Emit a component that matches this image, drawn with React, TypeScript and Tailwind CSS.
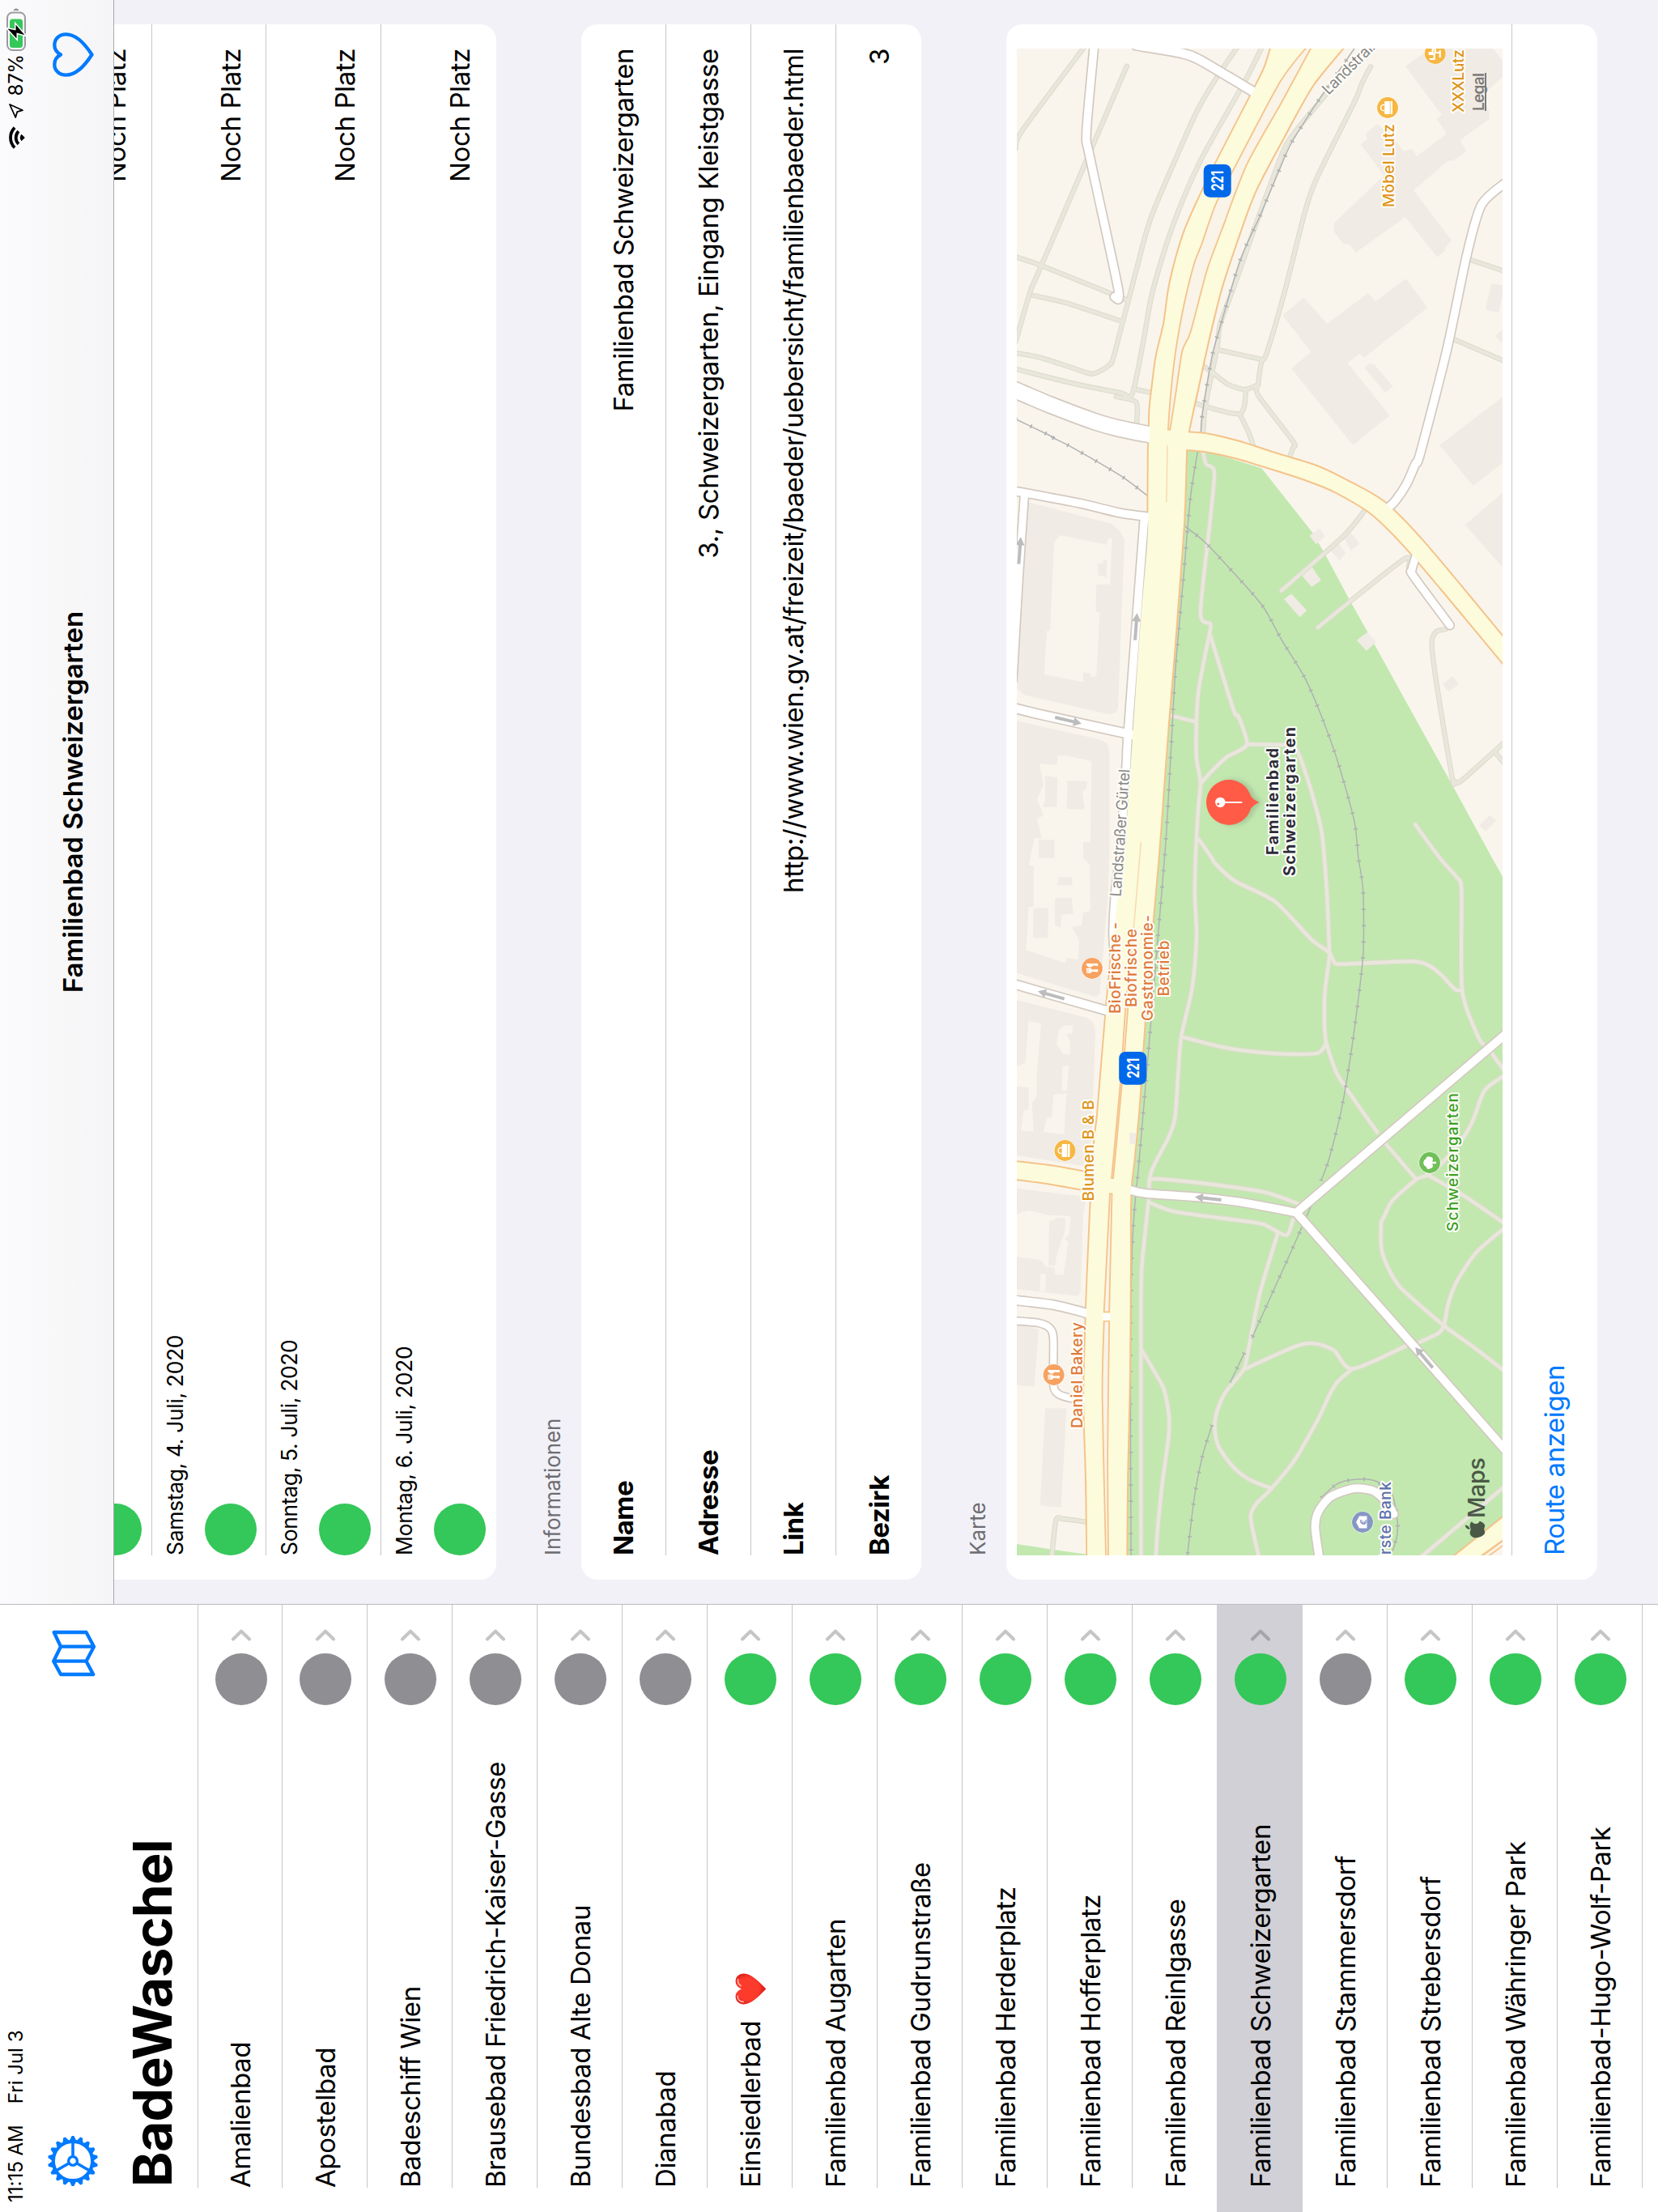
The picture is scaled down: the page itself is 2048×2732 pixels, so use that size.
import type { ReactNode } from "react";
import { FaApple, FaTree, FaUtensils } from "react-icons/fa";

/* ------------------------------------------------------------------ */
/* Map geometry                                                        */
/* ------------------------------------------------------------------ */

type Pt = [number, number];

// The survey sheets A–D are stacked north to south; each has its own offset.
const SHEET_OFFSET: Record<string, number> = { A: 40, B: 540, C: 1040, D: 1460 };

function pts(src: string): Pt[] {
  let sheet = "A";
  const out: Pt[] = [];
  for (const tok of src.trim().split(/\s+/)) {
    if (SHEET_OFFSET[tok] !== undefined) {
      sheet = tok;
      continue;
    }
    const [x, y] = tok.split(",").map(Number);
    out.push([1921 - SHEET_OFFSET[sheet] - y / 3, x / 2.45 - 16]);
  }
  return out;
}

const f = (n: number) => n.toFixed(1);

function curve(p: Pt[]): string {
  let d = "";
  const k = 0.13;
  for (let i = 0; i < p.length - 1; i++) {
    const p0 = p[i - 1] ?? p[i];
    const p1 = p[i];
    const p2 = p[i + 1];
    const p3 = p[i + 2] ?? p2;
    d += `C${f(p1[0] + (p2[0] - p0[0]) * k)} ${f(p1[1] + (p2[1] - p0[1]) * k)} ${f(p2[0] - (p3[0] - p1[0]) * k)} ${f(p2[1] - (p3[1] - p1[1]) * k)} ${f(p2[0])} ${f(p2[1])}`;
  }
  return d;
}

const line = (src: string) => {
  const p = pts(src);
  return `M${f(p[0][0])} ${f(p[0][1])}${curve(p)}`;
};

const poly = (src: string) =>
  "M" + pts(src).map((p) => `${f(p[0])} ${f(p[1])}`).join("L") + "Z";

const ribbon = (a: string, b: string) => {
  const pa = pts(a);
  const pb = pts(b).reverse();
  return `M${f(pa[0][0])} ${f(pa[0][1])}${curve(pa)}L${f(pb[0][0])} ${f(pb[0][1])}${curve(pb)}Z`;
};

const PARKS = [
  "B 552,45 600,45 780,115 935,355 975,440 1045,600 1100,720 1215,975 1360,1295 1478,1560 C 1515,141 D 1515,1240 1365,1390 370,1390 385,30 C 465,0 B 480,1350 520,720",
  "D 36,1340 150,1362 255,1380 255,1390 36,1390",
];

const BUILDINGS = [
  "A 1215,125 1290,60 1480,60 1510,105 1510,165 1445,235 1468,290 1470,320 1380,400 1400,440 1360,475 1345,475 1240,585 1355,770 1338,795 1335,810 1312,833 1215,685 1065,815 1045,785 1028,785 997,735 1000,705 1150,530 1080,415 1100,395 1095,375 1130,340 1145,355 1165,365 1210,440 1235,432 1250,458 1340,375 1310,320 1325,305",
  "A 843,1048 908,983 978,1080 1102,967 1125,997 1217,913 1282,1020 1090,1205 1078,1190 1040,1225 1168,1420 1055,1527 870,1245 930,1185",
  "A 1093,1245 1105,1227 1120,1230 1178,1312 1153,1335",
  "A 1475,930 1515,938 1498,1038 1457,1028",
  "A 1487,1125 1515,1095 1515,1160",
  "B 1318,30 1515,-155 1515,90 1420,180",
  "B 1395,325 1515,200 1515,490",
  "B 1035,0 1085,0 1060,27",
  "B 925,365 955,338 972,368 945,397",
  "B 900,510 932,480 960,530 932,555",
  "B 848,600 870,580 917,642 895,667",
  "B 1068,752 1100,722 1127,758 1097,792",
  "B 985,415 1012,390 1035,430 1015,457",
  "B 1030,375 1052,355 1077,395 1050,420",
  "B 1328,915 1358,885 1378,915 1345,943",
  "B 1438,1440 1470,1400 1490,1420 1458,1460",
  "B 72,240 325,320 350,345 365,380 345,1010 335,1022 318,1027 60,955 40,930 60,520",
  "B 36,1050 290,1120 312,1135 320,1165 C 320,0 315,200 290,560 280,573 268,570 36,485",
  "C 36,585 250,650 268,665 277,700 265,1100 240,1200 36,1160",
  "C 36,1283 250,1315 240,1380 D 232,405 225,422 36,396",
  "D 36,525 105,545 92,758 36,752",
  "D 125,838 190,838 173,1205 110,1198",
];

const COURTYARDS = [
  "B 170,363 312,398 315,375 328,375 326,405 322,545 280,545 278,645 290,650 280,885 265,888 262,875 240,870 240,907 122,880 130,717 140,717 152,390",
  "B 108,1210 160,1215 163,1180 190,1180 265,1200 262,1500 240,1500 240,1560 C 260,82 262,255 240,262 235,310 205,315 228,365 225,435 190,430 185,448 67,400 75,240 90,240 90,90 75,85 90,0 B 90,1515 92,1485 115,1485 100,1415 120,1400 100,1340 120,1290",
  "C 75,663 113,672 100,850 100,940 85,970 90,1072 52,1070 60,995 75,990 75,910 39,905 39,830 65,820",
  "C 165,700 180,680 208,680 208,708 190,712 200,740 200,788 180,785 160,750",
  "C 178,830 197,828 190,920 175,920",
  "C 150,935 190,930 185,1010 183,1082 120,1075 130,1022 145,1020",
  "D 36,120 75,105 135,122 202,125 198,195 185,210 195,225 180,345 155,340 155,318 125,312 115,290 36,276",
  "D 112,340 127,340 125,405 108,402",
];

const ANNEXES = [
  "B 285,468 300,468 300,455 312,455 310,520 285,510",
  "C 165,130 207,130 207,160 162,160",
  "C 90,245 135,245 133,355 88,355",
  "B 192,1272 252,1275 250,1300 238,1315 245,1380 190,1378",
  "B 125,1255 162,1260 160,1370 118,1370 125,1345",
  "C 155,207 205,207 210,265 175,270 172,315 155,310",
  "B 105,1490 153,1492 153,1560 105,1560",
  "D 137,148 163,132 185,132 185,180 160,270 155,310 135,310",
];

const PATHS = [
  "A 245,52 55,365 36,430",
  "A 372,125 115,860 80,960 36,1145",
  "A 36,832 115,865 375,993",
  "A 90,975 190,1003 355,1070",
  "A 708,52 645,165 585,290 530,440 450,670 420,790 335,1190 320,1230 303,1247 265,1265 200,1240 110,1205 36,1187",
  "A 782,52 730,180 595,475 510,720 450,960 420,1160 388,1340 350,1335 200,1298 36,1247",
  "A 340,1350 400,1370 402,1445",
  "A 395,1322 445,1335",
  "A 500,1352 515,1355",
  "A 975,230 900,340 855,415 820,520 760,720 700,930 655,1080 645,1170 625,1290 608,1400 603,1490",
  "B 603,55 612,100 637,128 625,300 595,650 625,692 620,740 590,930 583,1050 583,1190 595,1280 588,1380 580,1560 C 578,200 583,350 570,540 537,720 528,850 518,1020 500,1090 445,1225 438,1330 D 425,220 415,420 415,1390",
  "A 1110,127 1085,185 1060,260 945,545 910,670 850,960 795,1190 780,1220 770,1300 770,1345 875,1515 875,1540 B 865,72",
  "A 645,1175 785,1213",
  "A 575,1370 597,1243 630,1260 680,1305 730,1323 770,1305",
  "A 733,1323 713,1413 575,1373",
  "A 713,1413 740,1480 757,1540",
  "A 1410,842 1515,885",
  "A 1357,1135 1515,1218",
  "B 1090,275 1025,370 840,568",
  "B 1225,480 1207,455 950,705",
  "B 1340,710 1295,770 1355,1250 1365,1275 1385,1272 1515,1130",
  "B 1485,1165 1515,1210",
  "B 500,1030 583,1055",
  "B 625,735 695,1010 710,1035 735,1138 675,1185 635,1230 597,1280",
  "B 735,1138 850,1140 885,1155 925,1290 960,1450 970,1560 C 978,200 985,400 985,430 972,550 970,660 975,740 1005,850 1040,920 1130,1075",
  "C 1150,1110 1248,1250",
  "B 590,1490 630,1560 C 640,80 700,145 820,220 930,360 985,410 1000,445 1025,452 1235,442 1290,460 1330,500 1365,545 1388,550",
  "B 1245,1435 1320,1560 C 1370,130 1385,180 1387,550 1435,720 1450,748",
  "C 1475,780 1515,848",
  "C 540,722 650,757 740,775 850,785 950,782 975,745",
  "C 440,1248 490,1250 640,1270 780,1295 835,1315 890,1340",
  "C 1515,865 1455,920 1420,1030 1385,1105 1325,1190 1280,1235 1248,1250 1175,1330 1150,1390 D 1142,150 1142,240 1160,310 1200,390 1330,530 1420,610 1515,700",
  "C 1280,1232 1385,1305 D 1515,153",
  "D 440,75 520,110 760,150 800,165 855,197 875,140",
  "D 1515,170 1430,260 1370,370 1345,450 1332,530 1315,560 1260,592",
  "D 1220,605 1055,692 995,620 905,600 725,695",
  "D 1055,692 1010,740 985,790 950,880 880,1030 810,1135 765,1190 748,1230 750,1270 772,1390",
  "D 830,185 775,410 740,620 725,695 670,780 645,850 638,910 650,980 690,1050 740,1100 810,1135",
  "D 415,618 450,690 485,770 500,870 498,950 480,1110 465,1290 460,1390",
  "D 145,1390 158,1252 180,1248 255,1260",
  "D 1262,1390 1515,1128",
];

const RAILS = [
  "A 36,1433 150,1500 B 145,0 210,40 350,140 435,217",
  "A 1065,52 1010,150 945,265 870,410 830,520 775,680 715,845 650,1110 630,1200 600,1420 596,1490",
  "B 587,50 565,220 545,500 520,850 505,1180 490,1500 C 470,300 440,740 420,1030 405,1240 D 400,30 388,250 383,700 385,1390",
  "B 543,325 605,385 660,455 780,620 840,750 910,890 960,1030 1010,1200 1060,1420 1073,1560 C 1087,180 1087,420 1060,700 1025,970 985,1170 960,1255",
  "D 935,75 890,200 850,310 750,580",
  "D 728,632 685,742",
  "D 630,900 600,1020 575,1180 555,1390",
  "D 960,1170 1000,1125 1030,1108 1085,1100 1130,1110 1175,1160 1190,1240 1190,1310 1170,1390",
];

// [centre line, carriageway width]
const STREETS: [string, number][] = [
  ["A 273,52 250,370 260,460 346,950 335,980", 9.5],
  ["A 400,48 530,75 590,100 758,222", 10.5],
  ["A 36,1326 140,1380 270,1440 340,1465 448,1492", 19],
  ["A 1520,555 1445,640 1400,830 1340,1180 1260,1560 B 1245,100 1220,170 1185,235 1160,265", 9.5],
  ["B 1250,430 1235,490 1240,515 1350,697", 9],
  ["B 36,200 230,245 350,280 445,296", 9.5],
  ["B 62,220 45,520 27,900", 9],
  ["B 425,300 400,700 375,1110 370,1230 350,1560 C 338,180 331,330 335,420", 9.5],
  ["B 36,1005 120,1030 390,1103", 10.5],
  ["C 36,528 320,628", 10],
  ["D 36,438 150,455 255,487", 10],
  ["D 36,514 105,522 138,540 150,580 150,750 165,785 200,800 248,808", 8],
  ["C 378,1288 430,1302 580,1315 720,1335 885,1373", 9.5],
  ["C 1520,710 885,1373", 9.8],
  ["C 885,1373 D 1520,996", 9.8],
  ["D 954,1390 942,1280 952,1220 990,1165 1060,1135 1120,1145 1160,1190 1180,1230", 9.5],
];

const HIGHWAYS: [string, string][] = [
  [
    "A 810,52 790,130 760,205 640,490 585,630 548,735 520,845 500,950 485,1080 462,1200 450,1310 442,1400 440,1500 B 438,60 437,280 434,400 413,700 390,1110 370,1450 C 340,250 312,600 285,1000 275,1110 262,1380 D 250,470 243,800 250,1100 253,1390",
    "A 1030,52 935,195 850,380 760,590 700,790 655,960 615,1160 590,1300 570,1410 558,1483 B 552,45 545,300 520,720 495,1100 480,1350 467,1560 C 445,370 425,680 410,960 395,1160 385,1270 382,1380 D 382,300 380,700 373,1100 371,1390",
  ],
  [
    "A 530,1480 558,1483 620,1490 720,1520 820,1560 B 940,105 1020,150 1150,240 1275,395 1520,755",
    "B 530,40 552,45 610,52 700,75 860,135 920,160 1000,200 1115,285 1240,440 1520,850",
  ],
  ["C 36,1185 140,1200 285,1232", "C 36,1248 140,1265 285,1297"],
  ["D 1360,1390 1520,1233", "D 1435,1390 1520,1315"],
];

const MEDIANS: [string, string][] = [
  [
    "A 918,52 835,185 690,520 640,640 600,780 575,860 545,1010 520,1180 505,1340 497,1472",
    "A 932,52 840,260 735,490 660,730 615,880 565,1110 540,1180 520,1340 503,1472",
  ],
  ["C 390,320 368,620 352,900 326,1245", "C 391,320 375,620 357,900 331,1245"],
  ["D 321,43 303,481", "D 327,43 319,481"],
  ["D 303,515 298,800 309,1390", "D 319,515 314,1000 316,1390"],
  ["D 1442,1390 1520,1320", "D 1462,1390 1520,1338"],
];

const LANE_LINES = ["B 495,30 492,240", "B 415,1500 390,1860"];

// [tail, tip]
const ARROWS: [string, string][] = [
  ["B 45,470", "B 51,370"],
  ["B 397,752", "B 403,652"],
  ["B 155,1038", "B 235,1061"],
  ["C 183,581", "C 103,553"],
  ["C 658,1326", "C 578,1315"],
  ["D 1298,688", "D 1245,612"],
];

function Arrow({ from, to }: { from: string; to: string }) {
  const a = pts(from)[0];
  const b = pts(to)[0];
  const len = Math.hypot(b[0] - a[0], b[1] - a[1]);
  const deg = (Math.atan2(b[1] - a[1], b[0] - a[0]) * 180) / Math.PI;
  return (
    <path
      transform={`translate(${a[0]} ${a[1]}) rotate(${deg})`}
      d={`M0 -2H${len - 10}V-5.5L${len} 0L${len - 10} 5.5V2H0Z`}
      fill="#bcbcbc"
    />
  );
}

interface LabelProps {
  x: number;
  y: number;
  w: number;
  size?: number;
  fill: string;
  weight?: number;
  rotate?: number;
  halo?: string;
  children: string;
}

function Label({ x, y, w, size = 19, fill, weight = 500, rotate = 0, halo = "#fffdf8", children }: LabelProps) {
  return (
    <text
      x={x}
      y={y}
      textLength={w}
      fontSize={size}
      fontWeight={weight}
      fill={fill}
      stroke={halo}
      strokeWidth={4}
      strokeLinejoin="round"
      paintOrder="stroke"
      transform={rotate ? `rotate(${rotate} ${x} ${y})` : undefined}
    >
      {children}
    </text>
  );
}

function Poi({ x, y, fill, children }: { x: number; y: number; fill: string; children: ReactNode }) {
  return (
    <g transform={`translate(${x} ${y})`}>
      <circle r="13.6" fill="#ffffff" fillOpacity="0.7" />
      <circle r="12.9" fill={fill} />
      {children}
    </g>
  );
}

function Bag() {
  return (
    <g>
      <path d="M-3.6 -3.6V-5.2a3.6 3.2 0 0 1 7.2 0V-3.6" fill="none" stroke="#fff" strokeWidth="1.5" />
      <rect x="-8" y="-3.8" width="16" height="6.6" rx="0.8" fill="#fff" />
      <rect x="-8" y="3.6" width="16" height="2.4" fill="#fff" />
    </g>
  );
}

function Cutlery() {
  return <FaUtensils x={-7.5} y={-7.5} size={15} color="#ffffff" />;
}

function Shield({ x, y }: { x: number; y: number }) {
  return (
    <g transform={`translate(${x} ${y})`}>
      <rect x="-20.4" y="-17" width="40.8" height="34" rx="8" fill="#0069ea" />
      <text y="7.3" x="-12.5" fontSize="20" fontWeight="700" fill="#fff" textLength="25" lengthAdjust="spacingAndGlyphs">
        221
      </text>
    </g>
  );
}

function ParkMap() {
  return (
    <svg width="1861" height="600" viewBox="0 0 1861 600" className="block font-[Inter,sans-serif]">
      <rect width="1861" height="600" fill="#f9f5ed" />
      {PARKS.map((d) => (
        <path key={d} d={poly(d)} fill="#c2e8b0" />
      ))}
      {BUILDINGS.map((d) => (
        <path key={d} d={poly(d)} fill="#f0ebe4" />
      ))}
      {COURTYARDS.map((d) => (
        <path key={d} d={poly(d)} fill="#f9f5ed" />
      ))}
      {ANNEXES.map((d) => (
        <path key={d} d={poly(d)} fill="#f0ebe4" />
      ))}
      <g fill="none" strokeLinejoin="round" strokeLinecap="round">
        {PATHS.map((d) => (
          <path key={d} d={line(d)} stroke="#dcdccb" strokeWidth="6.4" />
        ))}
        {PATHS.map((d) => (
          <path key={d} d={line(d)} stroke="#e9e7dc" strokeWidth="4.2" />
        ))}
      </g>
      <g fill="none" stroke="#b0b2b1">
        {RAILS.map((d) => (
          <g key={d}>
            <path d={line(d)} strokeWidth="1.5" />
            <path d={line(d)} strokeWidth="5" strokeDasharray="1.8 18.200" />
          </g>
        ))}
      </g>
      {HIGHWAYS.map(([a, b]) => (
        <path key={a} d={ribbon(a, b)} fill="#fcfbdc" stroke="#f5c389" strokeWidth="4" />
      ))}
      <g fill="none" strokeLinejoin="round" strokeLinecap="round">
        {STREETS.map(([d, w]) => (
          <path key={d} d={line(d)} stroke="#d3c9c0" strokeWidth={w + 3.4} />
        ))}
        {STREETS.map(([d, w]) => (
          <path key={d} d={line(d)} stroke="#ffffff" strokeWidth={w} />
        ))}
      </g>
      {HIGHWAYS.map(([a, b]) => (
        <path key={a} d={ribbon(a, b)} fill="#fcfbdc" />
      ))}
      {MEDIANS.map(([a, b]) => (
        <path key={a} d={ribbon(a, b)} fill="#f9f3e8" stroke="#f5c389" strokeWidth="1.8" />
      ))}
      {LANE_LINES.map((d) => (
        <path key={d} d={line(d)} fill="none" stroke="#f8d9a8" strokeWidth="1.4" />
      ))}
      <path d={poly("D 300,487 322,487 322,512 300,512")} fill="#fff" />
      <path d={poly("C 380,1077 400,1077 398,1118 380,1118")} fill="#f0ebe4" />
      {ARROWS.map(([a, b]) => (
        <Arrow key={a} from={a} to={b} />
      ))}

      <Shield x={1697.7} y={247.7} />
      <Shield x={601.7} y={143.2} />

      <Label x={813} y={128.5} w={158} fill="#8a8a8a" weight={400} rotate={4}>
        Landstraßer Gürtel
      </Label>
      <Label x={1803} y={385} w={86} fill="#868686" weight={400} rotate={45}>
        Landstraß
      </Label>

      <Poi x={1788} y={458} fill="#f6b743">
        <Bag />
      </Poi>
      <Label x={1665} y={465.6} w={103} fill="#de9419">
        Möbel Lutz
      </Label>
      <Poi x={1855} y={516.7} fill="#f6b743">
        <path d="M-7 -7v6h6v-6h2v4h5v3h-5v6M-5 6h9" fill="none" stroke="#fff" strokeWidth="2.2" />
      </Poi>
      <Label x={1782} y={552} w={78} fill="#de9419">
        XXXLutz
      </Label>
      <Label x={1784} y={576.5} w={47} size={19} fill="#7d7b79" halo="none" weight={600}>
        Legal
      </Label>
      <rect x="1784" y="578" width="47" height="2" fill="#7d7b79" />

      <Poi x={725} y={93} fill="#f7a261">
        <Cutlery />
      </Poi>
      <Label x={669} y={128} w={113} fill="#e07a3b">
        BioFrische -
      </Label>
      <Label x={677} y={148} w={97} fill="#e07a3b">
        Biofrische
      </Label>
      <Label x={660} y={168.3} w={131} fill="#e07a3b">
        Gastronomie-
      </Label>
      <Label x={690.5} y={188} w={69} fill="#e07a3b">
        Betrieb
      </Label>

      <Poi x={500} y={59.5} fill="#f6b743">
        <Bag />
      </Poi>
      <Label x={437.5} y={95} w={125} fill="#de9419">
        Blumen B &amp; B
      </Label>
      <Poi x={223} y={45.6} fill="#f7a261">
        <Cutlery />
      </Poi>
      <Label x={157} y={81} w={131} fill="#e07a3b">
        Daniel Bakery
      </Label>
      <Poi x={485} y={510} fill="#70bf58">
        <path
          d="M-1.300 8V3C-4 5 -7.500 3.500 -7 0.800C-9 -1.500 -7.500 -4 -5 -4.200C-4 -8.500 3 -9 4.500 -4.800C7.500 -4.500 8.800 -1.500 7 0.800C7.500 3.800 4 5 1.300 3V8Z"
          fill="#fff"
        />
      </Poi>
      <Label x={400} y={545} w={171} fill="#38a01f">
        Schweizergarten
      </Label>
      <Poi x={41} y={427} fill="#8797c4">
        <path d="M-7.5 -4L0 -8L7.5 -4V5.5H-7.5Z" fill="#fff" />
        <text y="4.8" textAnchor="middle" fontSize="11" fontWeight="700" fill="#8797c4">
          €
        </text>
      </Poi>
      <Label x={-11} y={461.5} w={102} fill="#5b70ae">
        Erste Bank
      </Label>

      <g transform="translate(930 261.5)">
        <path
          d="M0 38L-8 29.5A28.2 28.2 0 1 1 8 29.5Z"
          fill="#5b6b4f"
          fillOpacity="0.28"
          className="blur-[3px]"
          transform="translate(0 3)"
        />
        <circle r="28" cy="0.5" fill="#ff5b47" />
        <path d="M-10 26Q-3 30 0 38Q3 30 10 26Z" fill="#ff5b47" />
        <circle cy="-10.2" r="6.2" fill="#fff" />
        <circle cx="-2" cy="-12.8" r="1.5" fill="#ff5b47" />
        <rect x="-1.1" y="-5" width="2.2" height="22" rx="1" fill="#fff" />
      </g>
      <Label x={865} y={322.5} w={132} size={19.5} weight={700} fill="#2d2d35" halo="#ffffff">
        Familienbad
      </Label>
      <Label x={839} y={343.8} w={184} size={19.5} weight={700} fill="#2d2d35" halo="#ffffff">
        Schweizergarten
      </Label>

      <FaApple x={18} y={552} size={28} color="#4a5846" />
      <text x="46" y="578" fontSize="29" fontWeight="500" fill="#4a5846" textLength="75">
        Maps
      </text>
    </svg>
  );
}

/* ------------------------------------------------------------------ */
/* Icons                                                               */
/* ------------------------------------------------------------------ */

function GearIcon() {
  const teeth = Array.from({ length: 18 }, (_, i) => i * 20);
  return (
    <svg width="62" height="62" viewBox="-31 -31 62 62" fill="none" stroke="#007aff">
      <circle r="24.2" strokeWidth="4.2" />
      {teeth.map((a) => (
        <path key={a} d="M25 -4.200L30.900 -1.400V1.400L25 4.200Z" fill="#007aff" stroke="none" transform={`rotate(${a})`} />
      ))}
      <circle r="5.4" strokeWidth="3.4" />
      {[0, 120, 240].map((a) => (
        <path key={a} d="M6 0H23" strokeWidth="3.6" transform={`rotate(${a})`} />
      ))}
    </svg>
  );
}

function MapIcon() {
  return (
    <svg width="60" height="60" viewBox="0 0 60 60" fill="none" stroke="#007aff" strokeWidth="4.3" strokeLinejoin="round">
      <path d="M56 6.7V46.5L38.3 56L20.3 46.5L4 55.2V15L20.3 6.2L38.3 15ZM38.3 15V56M20.3 6.2V46.5" />
    </svg>
  );
}

function HeartIcon() {
  return (
    <svg width="55" height="51" viewBox="0 0 55 51" fill="none" stroke="#007aff" strokeWidth="4.3" strokeLinejoin="round">
      <path d="M27.5 10C25 5.2 20.8 2.3 15.6 2.3C8 2.3 2.3 8.2 2.3 16.6C2.3 28.5 13.5 39.5 27.5 48.5C41.500 39.500 52.700 28.500 52.700 16.600C52.700 8.200 47 2.300 39.400 2.300C34.200 2.300 30 5.200 27.500 10Z" />
    </svg>
  );
}

function RedHeart() {
  return (
    <svg width="39" height="39" viewBox="0 0 39 39">
      <defs>
        <radialGradient id="redHeart" cx="0.5" cy="0.4" r="0.6">
          <stop offset="0.6" stopColor="#fd3b2d" />
          <stop offset="1" stopColor="#d21411" />
        </radialGradient>
      </defs>
      <path
        d="M19.500 8C17.500 3 14 0.600 10 0.600C4.500 0.600 0.600 5 0.600 10.600C0.600 20 10 29 19.500 38.200C29 29 38.400 20 38.400 10.600C38.400 5 34.500 0.600 29 0.600C25 0.600 21.500 3 19.500 8Z"
        fill="url(#redHeart)"
      />
      <path d="M3.500 10C4 5.500 7 3 10.500 3.200" fill="none" stroke="#ffb3ab" strokeWidth="1.800" strokeLinecap="round" />
      <path d="M23.500 7C25.500 4 28 3 31 3.600" fill="none" stroke="#ffb3ab" strokeWidth="1.800" strokeLinecap="round" />
    </svg>
  );
}

function WifiIcon() {
  return (
    <svg width="28" height="21" viewBox="0 0 28 21" fill="none" stroke="#000" strokeWidth="3.800">
      <path d="M1.600 8.100A17.600 17.600 0 0 1 26.400 8.100" />
      <path d="M6.200 12.900A11 11 0 0 1 21.800 12.900" />
      <path d="M14 20.800L9.800 16.500A6 6 0 0 1 18.200 16.500Z" fill="#000" stroke="none" />
    </svg>
  );
}

function LocationIcon() {
  return (
    <svg width="20" height="20" viewBox="0 0 20 20" fill="none" stroke="#000" strokeWidth="1.800" strokeLinejoin="round">
      <path d="M18 2L2 9.200L8.800 11.200L10.800 18Z" />
    </svg>
  );
}

function BatteryIcon() {
  return (
    <svg width="55" height="24" viewBox="0 0 55 24">
      <rect x="1" y="1" width="46.500" height="22" rx="6.500" fill="none" stroke="#9b9b9e" strokeWidth="2" />
      <path d="M50 8.500C53.500 9.500 53.500 14.500 50 15.500Z" fill="#8f8f92" />
      <rect x="4" y="4" width="35.500" height="16" rx="3.500" fill="#34c759" />
      <path
        d="M27.500 1.500L15.500 12.500H22.500L19.800 22.500L32.500 11.500H25.500Z"
        fill="#000"
        stroke="#fff"
        strokeWidth="3"
        paintOrder="stroke"
        strokeLinejoin="miter"
      />
    </svg>
  );
}

function Chevron({ active }: { active?: boolean }) {
  return (
    <svg
      width="15"
      height="26"
      viewBox="0 0 15 26"
      fill="none"
      stroke={active ? "#a5a4a9" : "#c5c5c7"}
      strokeWidth="4"
      strokeLinecap="round"
      strokeLinejoin="round"
    >
      <path d="M2.500 3L12.300 13L2.500 23" />
    </svg>
  );
}

/* ------------------------------------------------------------------ */
/* Data                                                                */
/* ------------------------------------------------------------------ */

interface Pool {
  name: string;
  open: boolean;
  favourite?: boolean;
  selected?: boolean;
}

const POOLS: Pool[] = [
  { name: "Amalienbad", open: false },
  { name: "Apostelbad", open: false },
  { name: "Badeschiff Wien", open: false },
  { name: "Brausebad Friedrich-Kaiser-Gasse", open: false },
  { name: "Bundesbad Alte Donau", open: false },
  { name: "Dianabad", open: false },
  { name: "Einsiedlerbad", open: true, favourite: true },
  { name: "Familienbad Augarten", open: true },
  { name: "Familienbad Gudrunstraße", open: true },
  { name: "Familienbad Herderplatz", open: true },
  { name: "Familienbad Hofferplatz", open: true },
  { name: "Familienbad Reinlgasse", open: true },
  { name: "Familienbad Schweizergarten", open: true, selected: true },
  { name: "Familienbad Stammersdorf", open: false },
  { name: "Familienbad Strebersdorf", open: true },
  { name: "Familienbad Währinger Park", open: true },
  { name: "Familienbad-Hugo-Wolf-Park", open: true },
];

const DAYS = [
  { date: "Samstag, 4. Juli, 2020", height: "h-[141px]" },
  { date: "Sonntag, 5. Juli, 2020", height: "h-[142px]" },
  { date: "Montag, 6. Juli, 2020", height: "h-[142.5px]" },
];

const FACTS = [
  { label: "Name", value: "Familienbad Schweizergarten", spacing: "tracking-[-0.44px]" },
  { label: "Adresse", value: "3., Schweizergarten, Eingang Kleistgasse", spacing: "tracking-[-0.33px]" },
  {
    label: "Link",
    value: "http://www.wien.gv.at/freizeit/baeder/uebersicht/familienbaeder.html",
    spacing: "tracking-[-0.5px]",
  },
  { label: "Bezirk", value: "3", spacing: "tracking-[-0.5px]" },
];

/* ------------------------------------------------------------------ */
/* Panels                                                              */
/* ------------------------------------------------------------------ */

function PoolRow({ pool, first }: { pool: Pool; first: boolean }) {
  return (
    <div className={`shrink-0 pl-[30px] ${pool.selected ? "-mt-px h-[106px] bg-[#d1d0d6] pt-px" : "h-[105px]"}`}>
      <div
        className={`flex h-[105px] items-center border-b pt-[2px] pr-[30px] ${pool.selected ? "border-transparent" : "border-[#c6c6c8]"} ${first ? "border-t" : ""}`}
      >
        <span className="text-[33px] tracking-[-0.42px]">{pool.name}</span>
        {pool.favourite && (
          <span className="ml-[20px]">
            <RedHeart />
          </span>
        )}
        <span className={`ml-auto size-16 rounded-full ${pool.open ? "bg-[#34c759]" : "bg-[#8e8e93]"}`} />
        <span className="ml-[15px]">
          <Chevron active={pool.selected} />
        </span>
      </div>
    </div>
  );
}

function Sidebar() {
  return (
    <aside className="flex h-full w-[751px] shrink-0 flex-col overflow-hidden border-r border-[#bcbbc0] bg-white">
      <div className="flex h-10 shrink-0 items-center gap-[26px] pl-[12px] text-[24px]">
        <span>11:15 AM</span>
        <span>Fri Jul 3</span>
      </div>
      <div className="flex h-[100px] shrink-0 items-center justify-between pr-[30px] pl-8">
        <GearIcon />
        <MapIcon />
      </div>
      <h1 className="flex h-[104px] shrink-0 items-center pb-2 pl-[31px] text-[66px] font-bold tracking-[-0.7px]">
        BadeWaschel
      </h1>
      {POOLS.map((pool, i) => (
        <PoolRow key={pool.name} pool={pool} first={i === 0} />
      ))}
    </aside>
  );
}

function NavBar() {
  return (
    <header className="h-[141px] shrink-0 border-b border-[#a9a9ad] bg-linear-to-b from-[#fbfafd] via-[#f8f8f9] to-[#f5f4f6]">
      <div className="flex h-10 items-center justify-end pr-[8px]">
        <WifiIcon />
        <span className="ml-[9px]">
          <LocationIcon />
        </span>
        <span className="ml-[9px] text-[24px] tracking-[-0.2px]">87%</span>
        <span className="ml-[4px]">
          <BatteryIcon />
        </span>
      </div>
      <div className="grid h-[100px] grid-cols-[1fr_auto_1fr] items-center px-10">
        <span />
        <h2 className="text-[33px] font-semibold tracking-[-0.04px]">Familienbad Schweizergarten</h2>
        <span className="justify-self-end">
          <HeartIcon />
        </span>
      </div>
    </header>
  );
}

function DayRow({ date, height }: { date: string; height: string }) {
  return (
    <div className={`flex flex-col ${height} border-t border-[#c6c6c8] pt-[11px] pr-[30px]`}>
      <span className="h-[34px] text-[26.5px] leading-[34px] tracking-[-0.35px]">{date}</span>
      <div className="mt-[20px] flex h-16 shrink-0 items-center justify-between">
        <span className="size-16 rounded-full bg-[#34c759]" />
        <span className="text-[33px] tracking-[-0.4px]">Noch Platz</span>
      </div>
    </div>
  );
}

function Detail() {
  return (
    <main className="flex h-full grow flex-col overflow-hidden bg-[#f2f1f7]">
      <NavBar />
      <div className="flex flex-col px-[30px]">
        <section className="rounded-b-[20px] bg-white pl-[30px]">
          <div className="h-[46px] overflow-hidden pr-[30px]">
            <div className="-mt-[30px] flex h-16 items-center justify-between">
              <span className="size-16 rounded-full bg-[#34c759]" />
              <span className="text-[33px] tracking-[-0.4px]">Noch Platz</span>
            </div>
          </div>
          {DAYS.map((day) => (
            <DayRow key={day.date} {...day} />
          ))}
        </section>

        <h3 className="flex h-[105.5px] items-center pt-[36px] pl-[30px] text-[26px] tracking-[-0.1px] text-[#6d6d72]">
          Informationen
        </h3>
        <section className="rounded-[20px] bg-white pl-[30px]">
          {FACTS.map((fact, i) => (
            <div
              key={fact.label}
              className={`flex h-[105px] items-center justify-between pt-px pr-[30px] ${i < 3 ? "border-b border-[#c6c6c8]" : ""}`}
            >
              <span className="text-[33px] font-bold tracking-[-0.5px]">{fact.label}</span>
              <span className={`text-[33px] ${fact.spacing}`}>{fact.value}</span>
            </div>
          ))}
        </section>

        <h3 className="flex h-[105px] items-center pt-[34px] pl-[30px] text-[26px] text-[#6d6d72]">Karte</h3>
        <section className="rounded-[20px] bg-white pl-[30px]">
          <div className="pt-[13px] pb-[11px]">
            <ParkMap />
          </div>
          <div className="flex h-[106px] items-center border-t border-[#c6c6c8] text-[33px] tracking-[-0.42px] text-[#007aff]">
            Route anzeigen
          </div>
        </section>
      </div>
    </main>
  );
}

export default function App() {
  return (
    <div className="h-[2732px] w-[2048px] overflow-hidden bg-white">
      <div className="flex h-[2048px] w-[2732px] origin-top-left translate-y-[2732px] -rotate-90 font-[Inter,sans-serif] leading-none text-black">
        <Sidebar />
        <Detail />
      </div>
    </div>
  );
}
